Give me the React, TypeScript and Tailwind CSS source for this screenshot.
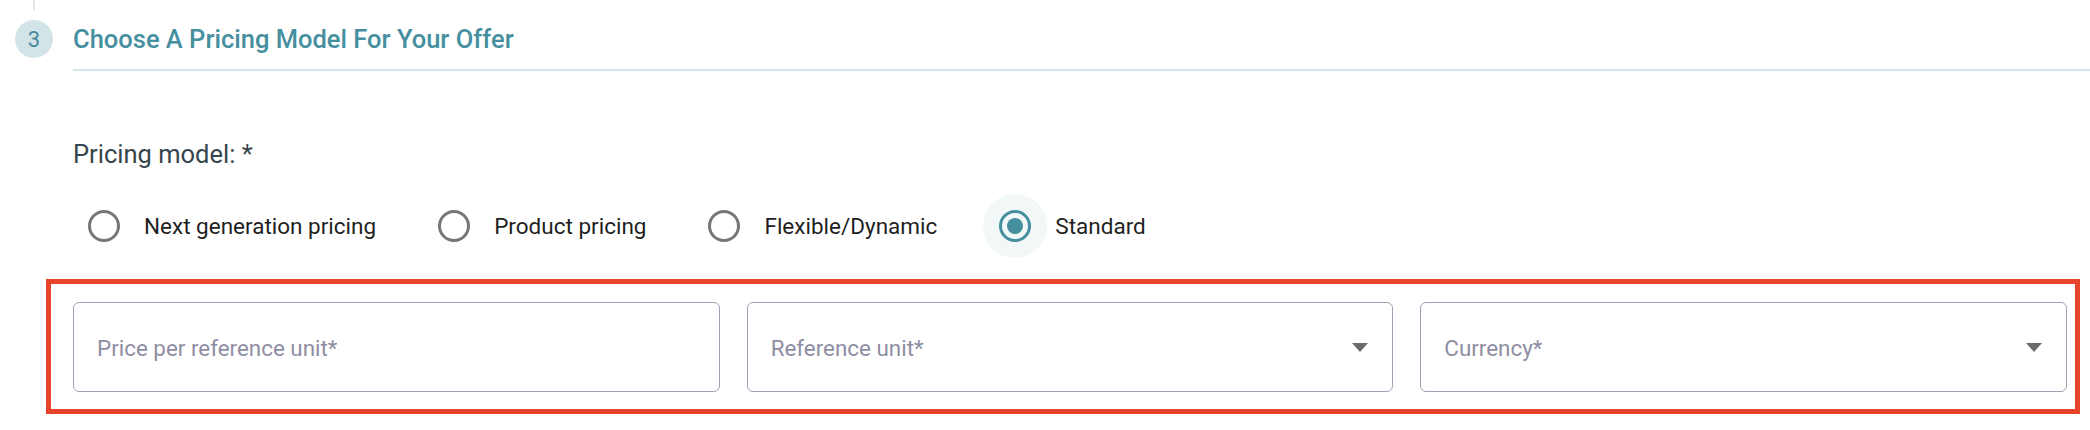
import React from "react";

const font = { fontFamily: "Roboto, 'Liberation Sans', sans-serif" };

function Radio({ label, checked }: { label: string; checked?: boolean }) {
  return (
    <label className="flex items-center">
      <span
        className={
          "flex h-[64px] w-[64px] items-center justify-center rounded-full " +
          (checked ? "bg-[#f2f7f8]" : "")
        }
      >
        {checked ? (
          <span className="flex h-[32px] w-[32px] items-center justify-center rounded-full border-[3px] border-[#468f9f]">
            <span className="h-[16px] w-[16px] rounded-full bg-[#468f9f]" />
          </span>
        ) : (
          <span className="h-[32px] w-[32px] rounded-full border-[3px] border-[#767676]" />
        )}
      </span>
      <span className="ml-[8px] text-[22.5px] leading-[28px] text-[#1f1f1f]">{label}</span>
    </label>
  );
}

function Field({ label, select }: { label: string; select?: boolean }) {
  return (
    <div className="flex h-[90px] items-center justify-between rounded-[6px] border border-[#a3a1b4] bg-white pl-[23px] pr-[24px]">
      <span className="pt-[2px] text-[22.4px] leading-[28px] text-[#8f8da3]">{label}</span>
      {select && (
        <svg width="16" height="9" viewBox="0 0 16 9" className="shrink-0">
          <path d="M0 0 H16 L8 9 Z" fill="#6b6b6b" />
        </svg>
      )}
    </div>
  );
}

export default function App() {
  return (
    <div className="h-[430px] w-[2090px] overflow-hidden bg-white" style={font}>
      <div className="ml-[33px] h-[10px] w-[2px] bg-[#e3e6e8]" />
      <div className="mt-[10px] flex items-start pl-[15px]">
        <div className="flex h-[38px] w-[38px] shrink-0 items-center justify-center rounded-full bg-[#d3e4e9] text-[22px] text-[#468a9a]">
          3
        </div>
        <div className="ml-[20px] flex-1 border-b-[2px] border-[#d5e6ea] pb-[11px]">
          <h2 className="text-[25.5px] font-medium leading-[38px] text-[#468f9f]">
            Choose A Pricing Model For Your Offer
          </h2>
        </div>
      </div>

      <div className="pl-[46px] pr-[10px]">
        <div className="ml-[27px] mt-[67px] text-[25.5px] leading-[32px] text-[#37464d]">
          Pricing model: *
        </div>
        <div className="ml-[26px] mt-[24px] flex items-center gap-[46px]">
          <Radio label="Next generation pricing" />
          <Radio label="Product pricing" />
          <Radio label="Flexible/Dynamic" />
          <Radio label="Standard" checked />
        </div>
        <div className="mt-[21px] border-[5px] border-[#e8432b] pb-[17px] pl-[22px] pr-[8px] pt-[18px]">
          <div className="grid grid-cols-3 gap-[27px]">
            <Field label="Price per reference unit*" />
            <Field label="Reference unit*" select />
            <Field label="Currency*" select />
          </div>
        </div>
      </div>
    </div>
  );
}
